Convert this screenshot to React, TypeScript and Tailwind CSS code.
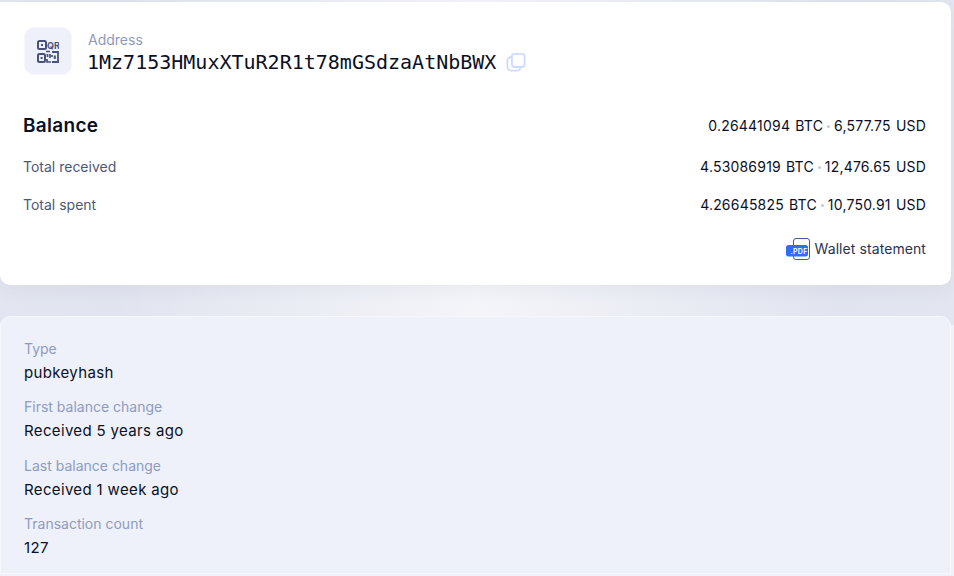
const rows = [
  { label: 'Total received', btc: '4.53086919 BTC', usd: '12,476.65 USD' },
  { label: 'Total spent', btc: '4.26645825 BTC', usd: '10,750.91 USD' },
]

const details = [
  { label: 'Type', value: 'pubkeyhash' },
  { label: 'First balance change', value: 'Received 5 years ago' },
  { label: 'Last balance change', value: 'Received 1 week ago' },
  { label: 'Transaction count', value: '127' },
]

function QrIcon() {
  return (
    <svg width="22" height="23" viewBox="0 0 22 23" fill="none" stroke="#47527a" strokeWidth="2">
      <rect x="1" y="1" width="8" height="8" rx="1.5" />
      <rect x="4" y="4" width="2" height="2" fill="#47527a" stroke="none" />
      <text x="10" y="8.8" fontSize="9" fontWeight="700" fontFamily="Inter, sans-serif" fill="#47527a" stroke="none">QR</text>
      <rect x="1" y="14" width="7" height="8" rx="1.5" />
      <rect x="3.6" y="17" width="2" height="2" fill="#47527a" stroke="none" />
      <path d="M15 12h6v10h-6" strokeWidth="1.8" />
      <path d="M9 11.5h4M10.5 14v3M10 19v3h4M13 14v4M15 15v2" strokeWidth="1.7" />
      <rect x="16.8" y="15.5" width="2" height="3.5" fill="#47527a" stroke="none" />
    </svg>
  )
}

function CopyIcon() {
  return (
    <svg width="20" height="20" viewBox="0 0 22 22" fill="none" stroke="#cddcfb" strokeWidth="2">
      <rect x="6.5" y="2" width="14" height="14.5" rx="3" />
      <path d="M6.5 5.5h-1a4 4 0 0 0-4 4v7a4 4 0 0 0 4 4h6.5a4 4 0 0 0 4-4" />
    </svg>
  )
}

function PdfIcon() {
  return (
    <svg width="24" height="22" viewBox="0 0 24 22">
      <rect x="7.5" y="0.5" width="16" height="21" rx="2.5" fill="#fff" stroke="#3d5a94" />
      <rect x="0" y="7" width="22" height="11.5" rx="2.5" fill="#2f6fed" />
      <text x="4.5" y="15.5" fontSize="7" fontWeight="600" letterSpacing="0.3" fontFamily="Inter, sans-serif" fill="#fff">.PDF</text>
    </svg>
  )
}

function Amount({ btc, usd }: { btc: string; usd: string }) {
  return (
    <div className="flex items-center text-sm text-[#0b1024] tracking-[0.2px] [word-spacing:1px]">
      <span>{btc}</span>
      <span className="mx-[4px] w-[3px] h-[3px] rounded-full bg-[#c5cbd8]" />
      <span>{usd}</span>
    </div>
  )
}

export default function App() {
  return (
    <div className="min-h-[576px] bg-[#f0f2f8] bg-[linear-gradient(90deg,#e3e6f0_0%,#e1e4ef_12%,#f4f5f9_50%,#e1e4ef_88%,#e3e6f0_100%)] bg-no-repeat bg-[length:100%_325px] pt-[2px] pr-[3px] font-['Inter',sans-serif] overflow-hidden">
      <div className="h-[283px] bg-white rounded-r-[10px] rounded-bl-[10px] shadow-[0_4px_18px_rgba(70,85,130,0.07)] pl-6 pr-[25px] pt-[25px]">
        <div className="flex items-start gap-4">
          <div className="w-[48px] h-[48px] rounded-[10px] bg-[#eef1fa] border border-[#f5f7fd] flex items-center justify-center">
            <QrIcon />
          </div>
          <div>
            <div className="text-sm leading-[20px] mt-[3px] text-[#8e9bbd]">Address</div>
            <div className="flex items-center gap-[10px] leading-[24px] -ml-px">
              <span className="font-['DejaVu_Sans_Mono',monospace] text-[20px] text-[#0b1024]">1Mz7153HMuxXTuR2R1t78mGSdzaAtNbBWX</span>
              <CopyIcon />
            </div>
          </div>
        </div>

        <div className="flex items-center justify-between mt-[37px] h-[28px]">
          <span className="text-[19px] font-semibold text-[#0b1024] -ml-px tracking-[0.3px]">Balance</span>
          <Amount btc="0.26441094 BTC" usd="6,577.75 USD" />
        </div>

        {rows.map((r, i) => (
          <div key={r.label} className={`flex items-center justify-between h-[20px] ${i === 0 ? 'mt-[17px]' : 'mt-[18px]'}`}>
            <span className="text-sm text-[#4d5876] -ml-px">{r.label}</span>
            <Amount btc={r.btc} usd={r.usd} />
          </div>
        ))}

        <div className="flex justify-end items-center gap-[5px] mt-[23px] text-sm text-[#2b3350] tracking-[0.08px]">
          <PdfIcon />
          <span>Wallet statement</span>
        </div>
      </div>

      <div className="mt-[31px] h-[258px] bg-[#eef1fa] border border-[#f6f8fe] rounded-t-[10px] pl-[23px] pt-[22px]">
        {details.map((d, i) => (
          <div key={d.label} className={i === 1 ? 'mb-[14px]' : 'mb-[13px]'}>
            <div className="text-sm leading-[20px] text-[#8e9bbd]">{d.label}</div>
            <div className="text-[15px] leading-[22px] mt-[3px] text-[#0b1024] tracking-[0.35px]">{d.value}</div>
          </div>
        ))}
      </div>
    </div>
  )
}
